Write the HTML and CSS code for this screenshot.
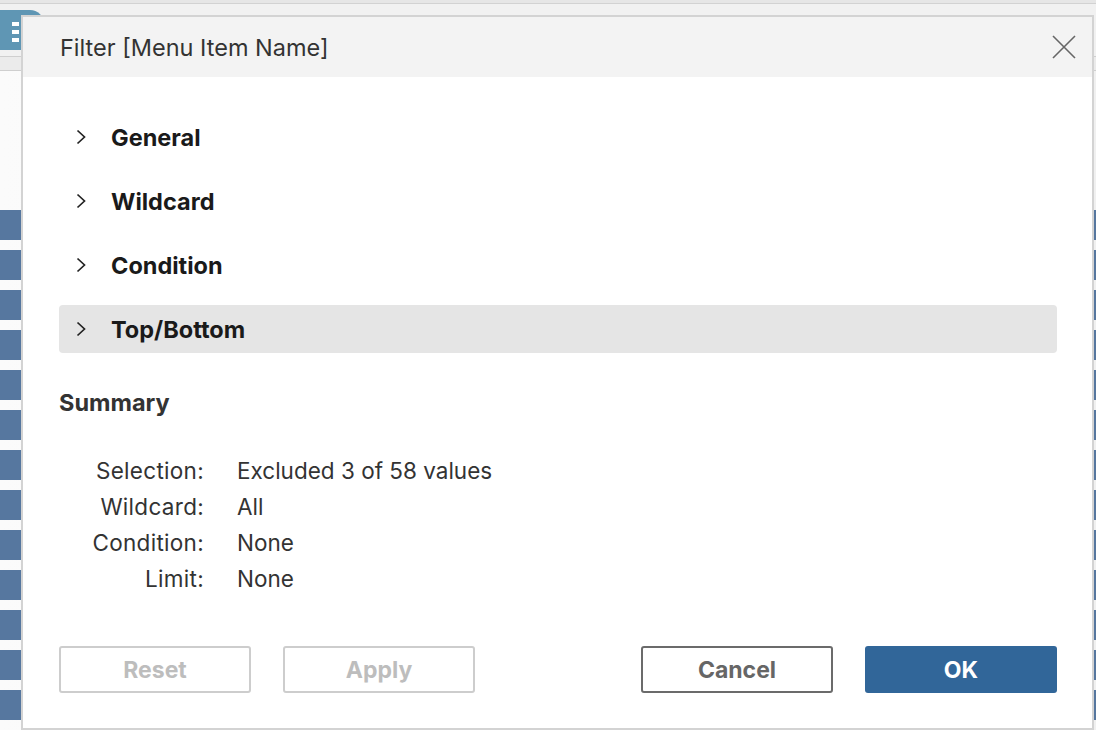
FILE: index.html
```html
<!DOCTYPE html>
<html>
<head>
<meta charset="utf-8">
<link rel="stylesheet" href="styles.css">
</head>
<body>
<div class="app">
  <div class="app-top"></div>
  <div class="app-tabrow">
    <div class="app-tab">
      <span class="tab-line"></span>
      <span class="tab-line"></span>
      <span class="tab-line"></span>
    </div>
  </div>
  <div class="app-toolbar"></div>
  <div class="app-rows">
    <div class="bar"></div><div class="bar"></div><div class="bar"></div><div class="bar"></div>
    <div class="bar"></div><div class="bar"></div><div class="bar"></div><div class="bar"></div>
    <div class="bar"></div><div class="bar"></div><div class="bar"></div><div class="bar"></div>
    <div class="bar"></div>
  </div>
</div>

<div class="dialog">
  <div class="dialog-header">
    <div class="dialog-title">Filter [Menu Item Name]</div>
    <svg class="close" viewBox="0 0 24 24" width="24" height="24"><path d="M1 1 L23 23 M23 1 L1 23" stroke="#666" stroke-width="1.6" fill="none"/></svg>
  </div>
  <div class="dialog-body">
    <div class="sections">
      <div class="section"><svg class="chev" viewBox="0 0 10 16" width="10" height="16"><path d="M1.5 1.5 L8.5 8 L1.5 14.5" stroke="#222" stroke-width="1.7" fill="none"/></svg><span>General</span></div>
      <div class="section"><svg class="chev" viewBox="0 0 10 16" width="10" height="16"><path d="M1.5 1.5 L8.5 8 L1.5 14.5" stroke="#222" stroke-width="1.7" fill="none"/></svg><span>Wildcard</span></div>
      <div class="section"><svg class="chev" viewBox="0 0 10 16" width="10" height="16"><path d="M1.5 1.5 L8.5 8 L1.5 14.5" stroke="#222" stroke-width="1.7" fill="none"/></svg><span>Condition</span></div>
      <div class="section active"><svg class="chev" viewBox="0 0 10 16" width="10" height="16"><path d="M1.5 1.5 L8.5 8 L1.5 14.5" stroke="#222" stroke-width="1.7" fill="none"/></svg><span>Top/Bottom</span></div>
    </div>
    <div class="summary-title">Summary</div>
    <div class="summary">
      <div class="k">Selection:</div><div class="v">Excluded 3 of 58 values</div>
      <div class="k">Wildcard:</div><div class="v">All</div>
      <div class="k">Condition:</div><div class="v">None</div>
      <div class="k">Limit:</div><div class="v">None</div>
    </div>
    <div class="buttons">
      <div class="group">
        <button class="btn disabled">Reset</button>
        <button class="btn disabled">Apply</button>
      </div>
      <div class="group">
        <button class="btn cancel">Cancel</button>
        <button class="btn ok">OK</button>
      </div>
    </div>
  </div>
</div>
</body>
</html>
```

FILE: styles.css
```css
html, body {
  margin: 0;
  padding: 0;
}
body {
  width: 1096px;
  height: 730px;
  overflow: hidden;
  position: relative;
  background: #f6f6f6;
  font-family: "Inter", "Liberation Sans", sans-serif;
  color: #333;
}
.app {
  display: flex;
  flex-direction: column;
  height: 730px;
  overflow: hidden;
}
.app-top {
  height: 3px;
  flex: none;
  background: #e6e6e6;
  border-bottom: 1px solid #d2d2d2;
}
.app-tabrow {
  height: 52px;
  flex: none;
  padding-top: 6px;
  box-sizing: border-box;
  background: #f1f1f1;
  display: flex;
  flex-direction: column;
}
.app-tab {
  width: 44px;
  height: 40px;
  background: #5f96b4;
  border-top-right-radius: 14px;
  display: flex;
  flex-direction: column;
  gap: 4px;
  padding: 12px 0 0 12px;
  box-sizing: border-box;
}
.tab-line {
  width: 7px;
  height: 4px;
  background: #fff;
}
.app-toolbar {
  height: 13px;
  flex: none;
  background: #ebebeb;
  border-top: 1px solid #cfcfcf;
  border-bottom: 1px solid #cfcfcf;
}
.app-rows {
  flex: 1;
  min-height: 0;
  overflow: hidden;
  display: flex;
  flex-direction: column;
  gap: 10px;
  padding-top: 139px;
  background: linear-gradient(to right, #fbfbfb, #f0f0f0);
}
.bar {
  height: 30px;
  flex: none;
  background: #56779f;
}

.dialog {
  position: absolute;
  left: 21px;
  top: 15px;
  width: 1073px;
  height: 715px;
  box-sizing: border-box;
  background: #fff;
  border: 2px solid #d3d3d3;
  display: flex;
  flex-direction: column;
}
.dialog-header {
  height: 60px;
  flex: none;
  background: #f3f3f3;
  display: flex;
  align-items: center;
  justify-content: space-between;
  padding: 0 16px 0 37px;
}
.dialog-title {
  font-size: 23.5px;
  color: #333;
}
.close {
  display: block;
}
.dialog-body {
  flex: 1;
  padding: 36px 35px 35px 36px;
  display: flex;
  flex-direction: column;
}
.sections {
  display: flex;
  flex-direction: column;
  gap: 16px;
}
.section {
  height: 48px;
  display: flex;
  align-items: center;
  padding-left: 17px;
  border-radius: 4px;
  font-size: 23.5px;
  font-weight: 700;
  color: #1a1a1a;
}
.section .chev {
  margin-right: 25px;
}
.section.active {
  background: #e5e5e5;
}
.summary-title {
  margin-top: 36px;
  font-size: 23.5px;
  font-weight: 700;
  line-height: 28px;
  color: #333;
}
.summary {
  margin-top: 36px;
  display: grid;
  grid-template-columns: 145px auto;
  column-gap: 33px;
  font-size: 22.5px;
  line-height: 36px;
  color: #333;
}
.summary .k {
  text-align: right;
  letter-spacing: 0.3px;
}
.buttons {
  margin-top: auto;
  display: flex;
  justify-content: space-between;
}
.group {
  display: flex;
  gap: 32px;
}
.btn {
  width: 192px;
  height: 47px;
  box-sizing: border-box;
  border-radius: 3px;
  font-family: inherit;
  font-size: 23px;
  font-weight: 700;
  background: #fff;
  padding: 0;
}
.btn.disabled {
  border: 2px solid #cdcdcd;
  color: #bdbdbd;
}
.btn.cancel {
  border: 2px solid #6b6b6b;
  color: #666;
}
.btn.ok {
  border: none;
  background: #316699;
  color: #fff;
}
```
